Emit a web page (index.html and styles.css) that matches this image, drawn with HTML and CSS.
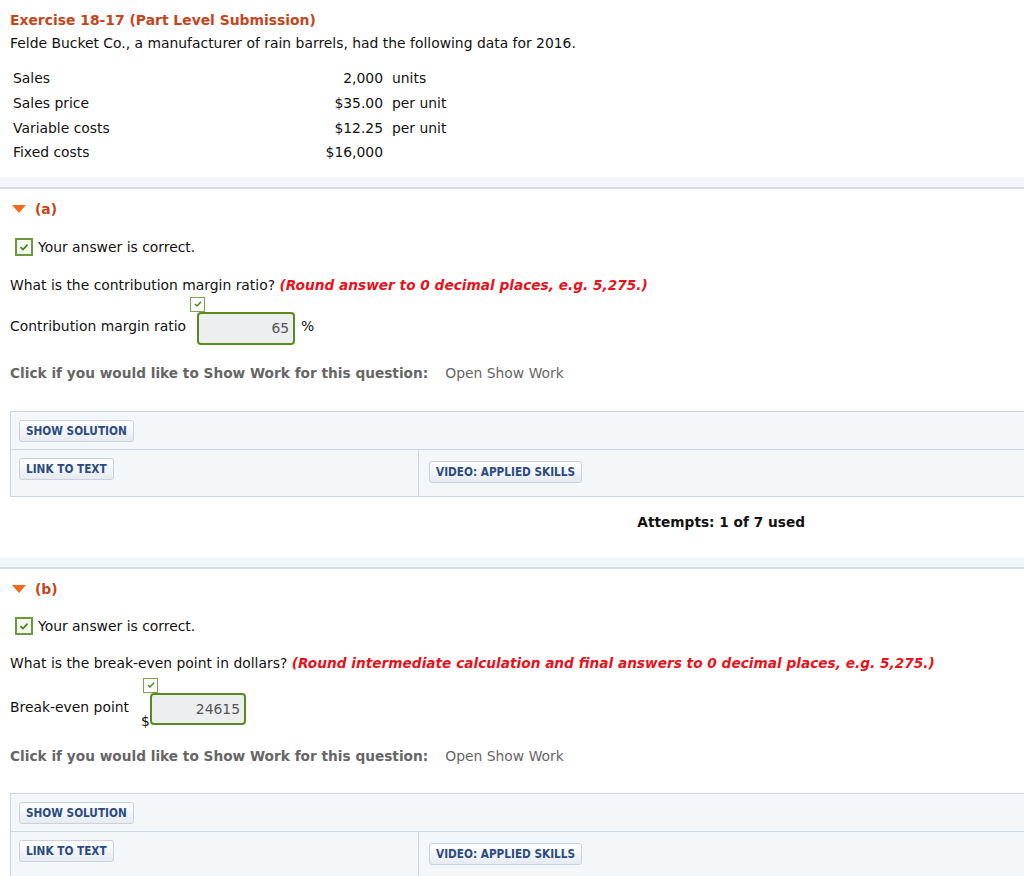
FILE: index.html
```html
<!DOCTYPE html>
<html>
<head>
<meta charset="utf-8">
<link rel="stylesheet" href="styles.css">
</head>
<body>
<div class="header">
  <div class="title">Exercise 18-17 (Part Level Submission)</div>
  <div class="intro">Felde Bucket Co., a manufacturer of rain barrels, had the following data for 2016.</div>
  <div class="data">
    <div class="lbl">Sales</div><div class="val">2,000</div><div class="unit">units</div>
    <div class="lbl">Sales price</div><div class="val">$35.00</div><div class="unit">per unit</div>
    <div class="lbl">Variable costs</div><div class="val">$12.25</div><div class="unit">per unit</div>
    <div class="lbl">Fixed costs</div><div class="val">$16,000</div><div class="unit"></div>
  </div>
</div>
<div class="band"></div>

<div class="part part-a">
  <div class="part-head"><span class="tri"></span><span class="part-label">(a)</span></div>
  <div class="correct">
    <span class="cbox"><svg width="14" height="14" viewBox="0 0 14 14"><path d="M3.5 7.2 L6 9.6 L10.5 4.6" fill="none" stroke="#3f7f1c" stroke-width="1.6"/></svg></span>
    <span>Your answer is correct.</span>
  </div>
  <div class="question">What is the contribution margin ratio? <em class="hint">(Round answer to 0 decimal places, e.g. 5,275.)</em></div>
  <div class="answer-row">
    <span class="ans-label">Contribution margin ratio</span>
    <span class="input-wrap input-a">
      <span class="mini-check"><svg width="12" height="12" viewBox="0 0 12 12"><path d="M3 6 L5 8 L9 3.8" fill="none" stroke="#4c8a22" stroke-width="1.5"/></svg></span>
      <span class="field">65</span>
    </span>
    <span class="suffix">%</span>
  </div>
  <div class="showwork"><b>Click if you would like to Show Work for this question:</b><span class="open">Open Show Work</span></div>
  <div class="tools">
    <div class="tools-row"><span class="btn">SHOW SOLUTION</span></div>
    <div class="tools-row split">
      <div class="cell left"><span class="btn">LINK TO TEXT</span></div>
      <div class="cell right"><span class="btn">VIDEO: APPLIED SKILLS</span></div>
    </div>
  </div>
  <div class="attempts">Attempts: 1 of 7 used</div>
</div>
<div class="band band2"></div>

<div class="part part-b">
  <div class="part-head"><span class="tri"></span><span class="part-label">(b)</span></div>
  <div class="correct">
    <span class="cbox"><svg width="14" height="14" viewBox="0 0 14 14"><path d="M3.5 7.2 L6 9.6 L10.5 4.6" fill="none" stroke="#3f7f1c" stroke-width="1.6"/></svg></span>
    <span>Your answer is correct.</span>
  </div>
  <div class="question">What is the break-even point in dollars? <em class="hint">(Round intermediate calculation and final answers to 0 decimal places, e.g. 5,275.)</em></div>
  <div class="answer-row row-b">
    <span class="ans-label">Break-even point</span>
    <span class="dollar">$</span>
    <span class="input-wrap input-b">
      <span class="mini-check"><svg width="12" height="12" viewBox="0 0 12 12"><path d="M3 6 L5 8 L9 3.8" fill="none" stroke="#4c8a22" stroke-width="1.5"/></svg></span>
      <span class="field">24615</span>
    </span>
  </div>
  <div class="showwork"><b>Click if you would like to Show Work for this question:</b><span class="open">Open Show Work</span></div>
  <div class="tools">
    <div class="tools-row"><span class="btn">SHOW SOLUTION</span></div>
    <div class="tools-row split">
      <div class="cell left"><span class="btn">LINK TO TEXT</span></div>
      <div class="cell right"><span class="btn">VIDEO: APPLIED SKILLS</span></div>
    </div>
  </div>
</div>
<div class="band"></div>
</body>
</html>
```

FILE: styles.css
```css
html, body {
  margin: 0;
  padding: 0;
  background: #fff;
}
body {
  font-family: "DejaVu Sans", Verdana, sans-serif;
  font-size: 13.9px;
  color: #111;
  overflow: hidden;
}
.header {
  padding: 10px 10px 12px 10px;
}
.title {
  color: #c4461c;
  font-weight: bold;
  font-size: 13.9px;
  line-height: 20px;
}
.intro {
  line-height: 20px;
  margin-top: 3px;
}
.data {
  display: grid;
  grid-template-columns: 290px 83px auto;
  grid-auto-rows: 24.7px;
  align-items: center;
  margin-top: 13px;
}
.data .lbl { padding-left: 3px; }
.data .val { text-align: right; }
.data .unit { padding-left: 9px; }

.band {
  height: 10px;
  background: #f3f6f9;
  border-bottom: 2px solid #d6dde4;
}
.band2 { margin-top: 25px; }

.part {
  padding: 0 10px;
}
.part-head {
  display: flex;
  align-items: center;
  height: 20px;
  margin-top: 10px;
}
.tri {
  width: 0;
  height: 0;
  margin-left: 2px;
  border-left: 7.5px solid transparent;
  border-right: 7.5px solid transparent;
  border-top: 8px solid #f26a1b;
}
.part-label {
  margin-left: 9px;
  color: #c4461c;
  font-weight: bold;
  font-size: 13.9px;
}
.correct {
  display: flex;
  align-items: center;
  margin-top: 18px;
  height: 20px;
}
.part-b .correct { margin-top: 17px; }
.cbox {
  display: inline-flex;
  align-items: center;
  justify-content: center;
  box-sizing: border-box;
  width: 18px;
  height: 18px;
  margin-left: 5px;
  margin-right: 5px;
  border: 2px solid #6b9a3e;
  background: #f4f8ef;
}
.question {
  margin-top: 18px;
  line-height: 20px;
}
.part-b .question { margin-top: 17px; }
.hint {
  color: #e8121c;
  font-weight: bold;
  font-style: italic;
  font-size: 13.7px;
}
.answer-row {
  display: flex;
  align-items: center;
  margin-top: 17px;
  height: 33px;
}
.ans-label {
  margin-top: -4px;
}
.input-wrap {
  position: relative;
  display: inline-block;
}
.input-a { margin-left: 11px; }
.field {
  display: flex;
  align-items: center;
  justify-content: flex-end;
  box-sizing: border-box;
  height: 33px;
  width: 98px;
  padding-right: 4px;
  background: #eceeef;
  border: 2px solid #5b8a1c;
  border-radius: 4px;
  color: #555;
}
.input-b .field {
  width: 96px;
  height: 32px;
}
.mini-check {
  position: absolute;
  left: -7px;
  top: -15px;
  box-sizing: border-box;
  width: 15px;
  height: 15px;
  border: 1px solid #79a552;
  background: #fff;
  display: flex;
  align-items: center;
  justify-content: center;
}
.suffix {
  margin-left: 6px;
  margin-top: -4px;
}
.row-b {
  height: 32px;
  margin-top: 20px;
}
.row-b .ans-label { margin-top: -4px; }
.dollar {
  align-self: flex-end;
  margin-left: 12px;
  margin-bottom: -4px;
  width: 9px;
}
.showwork {
  margin-top: 18px;
  line-height: 20px;
  color: #666;
}
.row-b + .showwork { margin-top: 21px; }
.showwork b { color: #666; font-size: 13.7px; }
.open {
  margin-left: 17px;
}
.tools {
  margin-top: 28px;
  border: 1px solid #cdd6df;
  border-right: none;
  background: #f4f7fa;
  margin-right: -10px;
}
.part-b .tools { margin-top: 27px; }
.tools-row {
  height: 37px;
  box-sizing: border-box;
  padding: 8px 0 0 8px;
}
.tools-row.split {
  display: flex;
  height: 47px;
  padding: 0;
  border-top: 1px solid #cdd6df;
}
.cell {
  box-sizing: border-box;
}
.cell.left {
  width: 408px;
  padding: 8px 0 0 8px;
  border-right: 1px solid #cdd6df;
}
.cell.right {
  padding: 11px 0 0 10px;
}
.btn {
  display: inline-flex;
  align-items: center;
  box-sizing: border-box;
  height: 22px;
  padding: 0 6px;
  font-family: "DejaVu Sans Condensed", "DejaVu Sans", sans-serif;
  font-weight: bold;
  font-size: 11.7px;
  color: #2b4b7e;
  background: linear-gradient(#ffffff, #e6ebf1);
  border: 1px solid #c9d2dc;
  border-radius: 3px;
}
.attempts {
  margin-top: 15px;
  line-height: 20px;
  font-weight: bold;
  font-size: 13.7px;
  text-align: right;
  padding-right: 209px;
}
```
